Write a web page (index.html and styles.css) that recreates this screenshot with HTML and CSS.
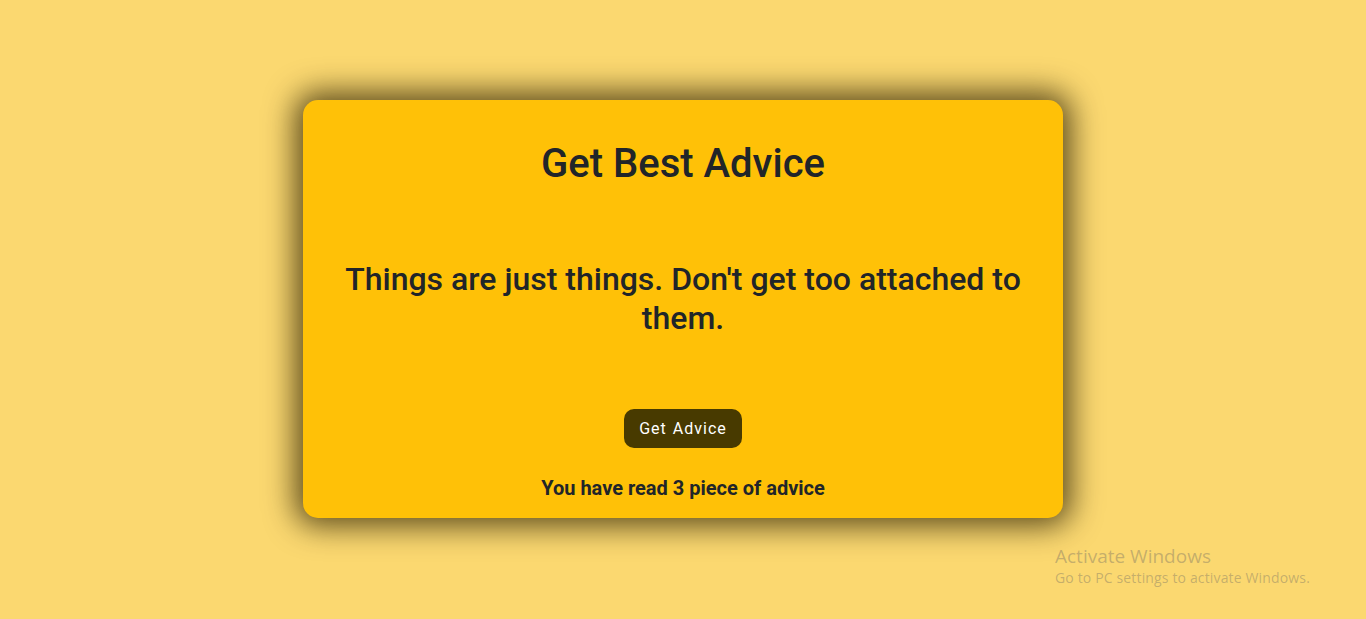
FILE: index.html
```html
<!DOCTYPE html>
<html lang="en">
<head>
<meta charset="utf-8">
<title>Get Best Advice</title>
<link rel="stylesheet" href="styles.css">
</head>
<body>
<main class="page">
  <section class="card">
    <h1 class="title">Get Best Advice</h1>
    <p class="quote">Things are just things. Don't get too attached to them.</p>
    <button class="btn" type="button">Get Advice</button>
    <p class="count">You have read 3 piece of advice</p>
  </section>
</main>
<div class="watermark">
  <div class="wm-title">Activate Windows</div>
  <div class="wm-sub">Go to PC settings to activate Windows.</div>
</div>
</body>
</html>
```

FILE: styles.css
```css
* { box-sizing: border-box; }
html, body { margin: 0; height: 100%; }
body {
  background: #fbd870;
  font-family: Roboto, "Liberation Sans", Arial, sans-serif;
  color: #212529;
}
.page {
  display: flex;
  justify-content: center;
  padding-top: 100px;
}
.card {
  width: 760px;
  height: 418px;
  background: #ffc107;
  border-radius: 15px;
  box-shadow: 0 0 30px 8px rgba(40, 30, 0, 0.75);
  display: flex;
  flex-direction: column;
  align-items: center;
  padding: 40px 40px 0;
  text-align: center;
}
.title {
  margin: 0;
  font-size: 40px;
  font-weight: 500;
  line-height: 48px;
}
.quote {
  margin: 72px 0 0;
  font-size: 32px;
  font-weight: 500;
  line-height: 39px;
}
.btn {
  margin-top: 71px;
  background: #483a00;
  color: #fff;
  border: 0;
  border-radius: 10px;
  width: 118px;
  height: 39px;
  font-family: Roboto, "Liberation Sans", Arial, sans-serif;
  font-size: 16px;
  letter-spacing: 1px;
  word-spacing: 1px;
  cursor: pointer;
}
.count {
  margin: 28px 0 0;
  font-size: 20px;
  font-weight: 700;
}
.watermark {
  position: absolute;
  left: 1055px;
  top: 544px;
  color: rgba(130, 120, 100, 0.45);
  font-family: "Open Sans", "Noto Sans", sans-serif;
}
.wm-title { font-size: 19px; line-height: 24px; }
.wm-sub { font-size: 14px; line-height: 20px; letter-spacing: 0.15px; }
```
